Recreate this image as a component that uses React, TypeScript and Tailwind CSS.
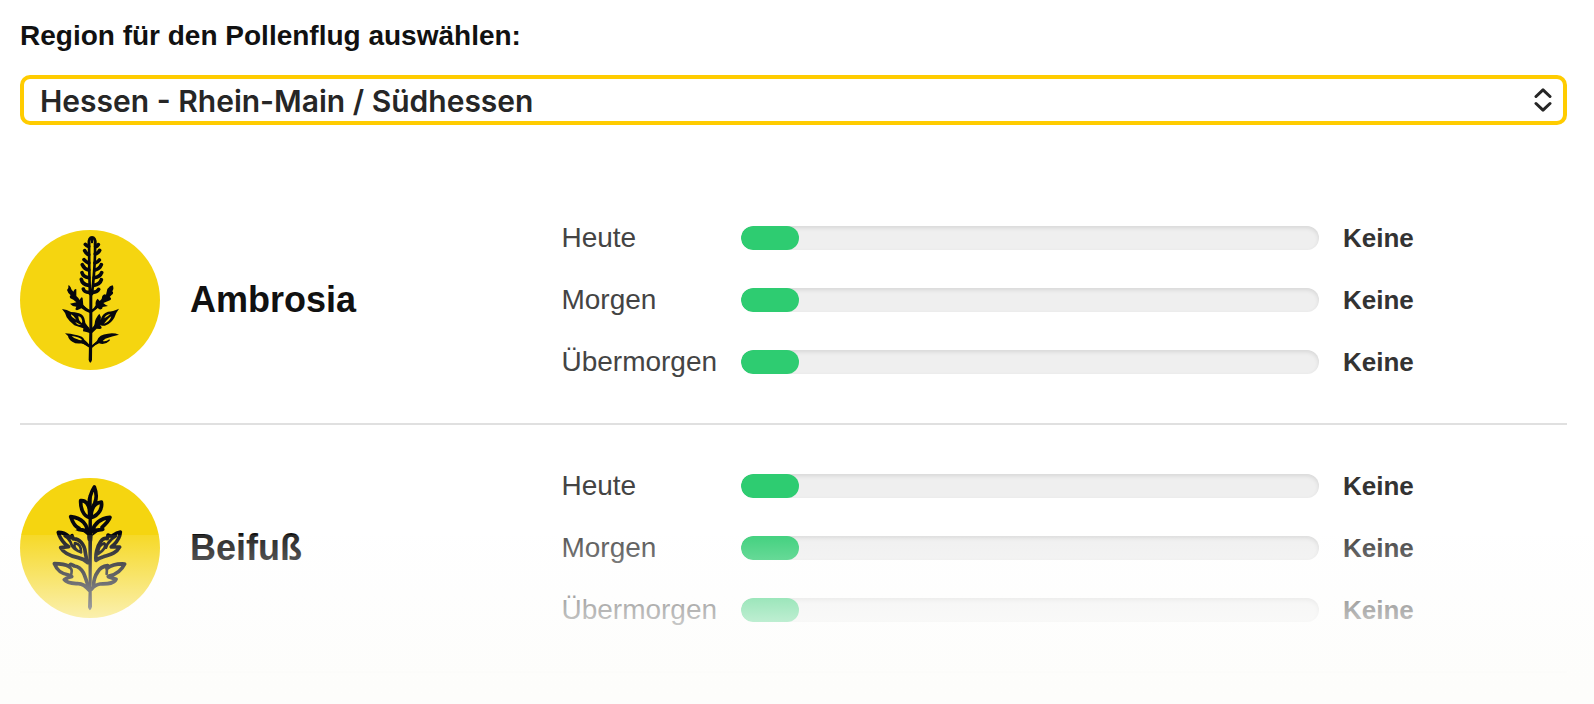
import React from "react";

type Forecast = { day: string; level: string; percent: number };
type Pollen = { name: string; icon: React.ReactNode; forecast: Forecast[] };

const forecast: Forecast[] = [
  { day: "Heute", level: "Keine", percent: 10 },
  { day: "Morgen", level: "Keine", percent: 10 },
  { day: "Übermorgen", level: "Keine", percent: 10 },
];

function PlantBadge({ children }: { children: React.ReactNode }) {
  return (
    <svg viewBox="30 30 420 420" className="size-[140px] shrink-0" aria-hidden="true">
      <circle cx="240" cy="240" r="210" fill="#f5d510" />
      {children}
    </svg>
  );
}

function AmbrosiaIcon() {
  return (
    <PlantBadge>
      <g fill="none" stroke="#06070d" strokeLinecap="round" strokeLinejoin="round">
        <path strokeWidth="8" d="M237 72C233 45 259 45 256 72M246 56V66" />
        <path strokeWidth="8" d="M237 70C238 110 237 160 240 222M255 70C256 110 252 170 246 222" />
        <path
          strokeWidth="11"
          d="M236 79Q230 78 226 73M236 104Q229 102 224 92M236 129Q228 126 222 119M236 150Q223 147 217 134M236 173Q220 171 216 158M237 196Q217 194 214 178M238 217Q222 217 220 207
          M257 80Q262 79 265 74M256 102Q265 100 269 91M255 129Q263 127 268 120M255 150Q269 147 274 134M253 173Q270 171 275 158M251 196Q270 193 274 179M248 217Q262 217 266 208"
        />
        <path strokeWidth="5" d="M240 272C232 272 225 264 215 254M245 270C254 270 262 262 272 252" />
        <path strokeWidth="5" d="M240 381C226 370 213 365 198 361M243 381C254 371 264 365 276 359" />
        <path strokeWidth="6" d="M241 333C234 322 226 320 218 312M244 330C254 316 264 312 280 304" />
      </g>
      <g fill="#06070d">
        <path d="M238 210H247L247 330L246 420Q241 436 236 420L238 330Z" />
        <path d="M175 196Q181 197 184 208L190 215Q194 204 199 208L199 228Q207 235 209 240Q215 226 218 235L220 256Q233 269 242 272L241 280Q226 275 214 265Q200 274 196 268L199 260Q186 259 180 251L199 247Q190 238 181 235Q177 228 182 226Q173 218 171 210Q177 206 175 196Z" />
        <path d="M308 196Q313 206 307 214Q313 220 304 226L299 231Q307 236 300 241L280 249Q286 255 294 258L278 261Q278 270 268 268L263 264Q254 272 244 279L243 271Q254 264 257 256Q255 242 263 236L269 243Q277 238 277 228Q282 221 288 224L292 207Q300 197 308 196Z" />
        <path fillRule="evenodd" d="M156 267Q171 269 183 276Q193 276 207 280Q222 284 225 303Q224 311 232 317Q239 322 238 330L241 340Q229 336 219 334L220 325Q206 320 193 316Q178 305 170 292Q166 277 156 267ZM183 283Q182 292 199 299Q190 286 183 283ZM205 288Q205 302 216 310Q219 293 205 288ZM196 306Q201 316 213 315Q205 311 196 306Z" />
        <path fillRule="evenodd" d="M327 266Q317 279 313 293Q304 309 288 316Q280 320 270 314Q280 325 270 327L260 326L244 341L244 329Q252 323 254 311Q254 297 268 281Q274 288 272 300Q276 280 294 275Q308 275 327 266ZM301 282Q286 284 283 295Q293 290 301 282ZM304 289Q299 292 289 302L282 311Q299 306 304 289Z" />
        <path fillRule="evenodd" d="M165 340Q179 340 202 346Q218 349 223 359Q231 365 241 377L240 384Q226 372 215 370Q198 373 187 365Q175 358 174 348ZM185 348Q191 355 202 358Q213 363 216 359Q206 350 185 348Z" />
        <path d="M327 344Q312 338 294 341Q267 343 261 362Q253 371 243 379L243 386Q256 374 267 370Q286 376 300 361L298 358Q288 366 278 363L286 356Q306 349 327 344Z" />
      </g>
    </PlantBadge>
  );
}

function BeifussIcon() {
  return (
    <PlantBadge>
      <g fill="none" stroke="#06070d" strokeLinecap="round" strokeLinejoin="round">
        <path
          strokeWidth="11"
          d="M239 148C240 122 233 104 241 84Q246 67 253 57C260 75 261 91 254 106L246 121
          M240 149C219 145 211 119 212 98C227 96 238 110 239 132
          M243 149C243 122 253 105 274 102C278 119 268 141 243 149
          M236 191C230 178 226 152 182 146C188 164 196 177 207 181L205 184L228 188
          M246 191C251 173 262 152 300 148C297 159 285 170 276 178L278 184L257 187
          M236 284C229 278 228 264 226 254C224 228 206 211 190 213L186 203Q184 214 176 205C166 196 154 193 145 193C148 207 155 217 166 229L176 236L152 239C162 257 180 264 204 269Q222 273 233 284
          M258 277C256 260 261 236 272 221Q280 209 292 212L294 201Q303 207 309 202Q320 193 331 192C330 210 322 220 311 231L304 237L329 237C318 258 298 260 280 266Q266 270 258 277
          M236 359C232 347 226 326 220 314Q210 296 193 294L185 290Q180 287 178 296C164 288 148 287 133 287C141 307 152 317 176 321L185 326Q175 326 163 335C172 347 189 346 205 347Q221 347 238 367
          M252 355C249 340 256 321 263 312Q272 296 293 293L291 301C307 289 326 287 344 288C334 308 322 318 300 323L295 326L318 334C311 349 289 347 270 348Q255 350 244 364"
        />
        <path
          strokeWidth="8"
          d="M164 204Q176 209 182 223Q186 239 201 247M213 253C197 248 190 236 195 225C209 228 214 238 213 253M318 204Q303 212 292 229L288 239M264 258C264 240 272 228 283 226C291 234 280 249 264 258M178 298Q188 302 184 318M291 300L290 318"
        />
      </g>
      <path fill="#06070d" d="M237 80H245L246 195Q249 208 246 222L245 360L246 416Q240 436 234 418L236 365L235 220Q229 210 235 194Z" />
      <path fill="#06070d" d="M195 187L218 181L236 195L242 211L251 189L279 182L260 194L247 204L245 218H234L232 202L216 188Z" />
    </PlantBadge>
  );
}

const pollen: Pollen[] = [
  { name: "Ambrosia", icon: <AmbrosiaIcon />, forecast },
  { name: "Beifuß", icon: <BeifussIcon />, forecast },
];

function ForecastRow({ day, level, percent }: Forecast) {
  return (
    <li className="grid grid-cols-[156px_1fr_224px] items-center gap-6 leading-[30px]">
      <span className="text-[28px] text-[#444444]">{day}</span>
      <div
        role="meter"
        aria-label={`${day}: ${level}`}
        aria-valuenow={percent}
        aria-valuemin={0}
        aria-valuemax={100}
        className="h-6 overflow-hidden rounded-full bg-[#efefef] shadow-[inset_0_2px_4px_rgba(0,0,0,0.1)]"
      >
        <div className="h-full rounded-full bg-[#2ecc71]" style={{ width: `${percent}%` }} />
      </div>
      <span className="text-[26px] font-bold text-[#333333]">{level}</span>
    </li>
  );
}

export default function App() {
  return (
    <main className="relative bg-white pt-5 pr-[27px] pb-[31px] pl-5 font-['Liberation_Sans',Arial,sans-serif]">
      <label htmlFor="region" className="block text-[28px] leading-8 font-bold text-[#111111]">
        Region für den Pollenflug auswählen:
      </label>
      <div className="relative mt-[23px]">
        <select
          id="region"
          defaultValue="rhein-main"
          className="block h-[50px] w-full appearance-none rounded-[10px] border-4 border-[#ffcc00] bg-white pr-12 pl-4 font-[Inter,sans-serif] text-[30px] font-semibold text-[#262626] outline-none"
        >
          <option value="rhein-main">Hessen - Rhein-Main / Südhessen</option>
        </select>
        <svg
          viewBox="0 0 18 24"
          className="pointer-events-none absolute inset-y-0 right-[15px] my-auto h-6 w-[18px]"
          fill="none"
          stroke="#262626"
          strokeWidth="3"
          strokeLinecap="round"
          strokeLinejoin="round"
          aria-hidden="true"
        >
          <path d="M2 8.5 9 1.8l7 6.7M2 15.5 9 22.2l7-6.7" />
        </svg>
      </div>

      <ul className="mt-[52px]">
        {pollen.map((p) => (
          <li key={p.name} className="grid grid-cols-[35fr_65fr] items-center border-b-2 border-[#e0e0e0] py-[46px]">
            <div className="-my-2 flex items-center gap-[30px]">
              {p.icon}
              <h2 className="text-[36px] leading-10 font-bold text-[#111111]">{p.name}</h2>
            </div>
            <ul className="flex flex-col gap-8">
              {p.forecast.map((f) => (
                <ForecastRow key={f.day} {...f} />
              ))}
            </ul>
          </li>
        ))}
      </ul>

      <div className="pointer-events-none absolute inset-x-0 bottom-0 h-[169px] bg-[linear-gradient(to_bottom,rgba(253,253,252,0.1)_0%,rgba(253,253,252,0.68)_50%,rgba(253,253,251,0.96)_80%,rgb(253,253,251)_100%)]" />
    </main>
  );
}
